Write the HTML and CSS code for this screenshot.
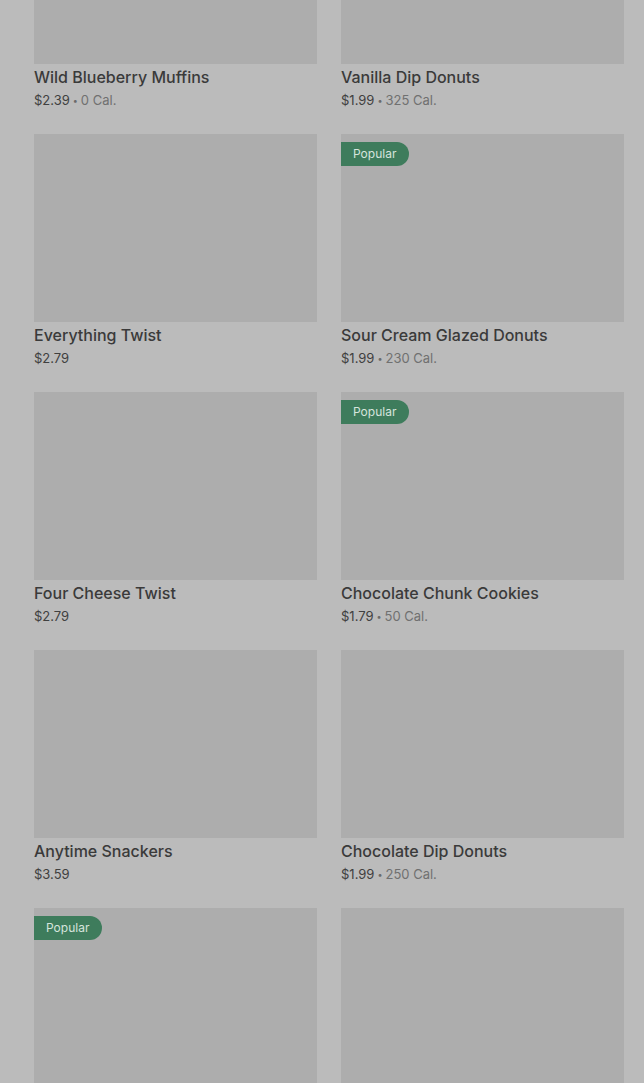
FILE: index.html
```html
<!DOCTYPE html>
<html lang="en">
<head>
<meta charset="utf-8">
<title>Menu</title>
<link rel="stylesheet" href="styles.css">
</head>
<body>
<div class="page">
  <div class="grid">
    <div class="card">
      <div class="img"></div>
      <div class="title">Wild Blueberry Muffins</div>
      <div class="meta"><span class="price">$2.39</span><span class="sep">•</span><span class="cal">0 Cal.</span></div>
    </div>
    <div class="card">
      <div class="img"></div>
      <div class="title">Vanilla Dip Donuts</div>
      <div class="meta"><span class="price">$1.99</span><span class="sep">•</span><span class="cal">325 Cal.</span></div>
    </div>
    <div class="card">
      <div class="img"></div>
      <div class="title">Everything Twist</div>
      <div class="meta"><span class="price">$2.79</span></div>
    </div>
    <div class="card">
      <div class="img"><span class="badge">Popular</span></div>
      <div class="title">Sour Cream Glazed Donuts</div>
      <div class="meta"><span class="price">$1.99</span><span class="sep">•</span><span class="cal">230 Cal.</span></div>
    </div>
    <div class="card">
      <div class="img"></div>
      <div class="title">Four Cheese Twist</div>
      <div class="meta"><span class="price">$2.79</span></div>
    </div>
    <div class="card">
      <div class="img"><span class="badge">Popular</span></div>
      <div class="title">Chocolate Chunk Cookies</div>
      <div class="meta"><span class="price">$1.79</span><span class="sep">•</span><span class="cal">50 Cal.</span></div>
    </div>
    <div class="card">
      <div class="img"></div>
      <div class="title">Anytime Snackers</div>
      <div class="meta"><span class="price">$3.59</span></div>
    </div>
    <div class="card">
      <div class="img"></div>
      <div class="title">Chocolate Dip Donuts</div>
      <div class="meta"><span class="price">$1.99</span><span class="sep">•</span><span class="cal">250 Cal.</span></div>
    </div>
    <div class="card">
      <div class="img"><span class="badge">Popular</span></div>
    </div>
    <div class="card">
      <div class="img"></div>
    </div>
  </div>
</div>
</body>
</html>
```

FILE: styles.css
```css
html, body {
  margin: 0;
  padding: 0;
  background: #bbbbbb;
  height: 1083px;
  overflow: hidden;
}

.page {
  padding: 0 20px 0 34px;
  font-family: Inter, "Liberation Sans", sans-serif;
}

.grid {
  margin-top: -124px;
  display: grid;
  grid-template-columns: 283px 283px;
  column-gap: 24px;
}

.card {
  padding-bottom: 24px;
}

.img {
  position: relative;
  height: 188px;
  background: #adadad;
}

.badge {
  position: absolute;
  left: 0;
  top: 8px;
  height: 24px;
  width: 68px;
  box-sizing: border-box;
  padding-left: 12px;
  line-height: 24px;
  font-size: 12px;
  color: #d6e4dc;
  background: #3e7c5c;
  border-radius: 0 12px 12px 0;
}

.title {
  margin-top: 3px;
  height: 20px;
  line-height: 20px;
  font-size: 16px;
  font-weight: 500;
  color: #3a3a3a;
  white-space: nowrap;
}

.meta {
  margin-top: 3px;
  height: 20px;
  display: flex;
  align-items: center;
  font-size: 13px;
  white-space: nowrap;
}

.price {
  color: #404040;
}

.sep {
  color: #6a6a6a;
  font-size: 9px;
  margin: 0 3px;
}

.cal {
  color: #707070;
}
```
